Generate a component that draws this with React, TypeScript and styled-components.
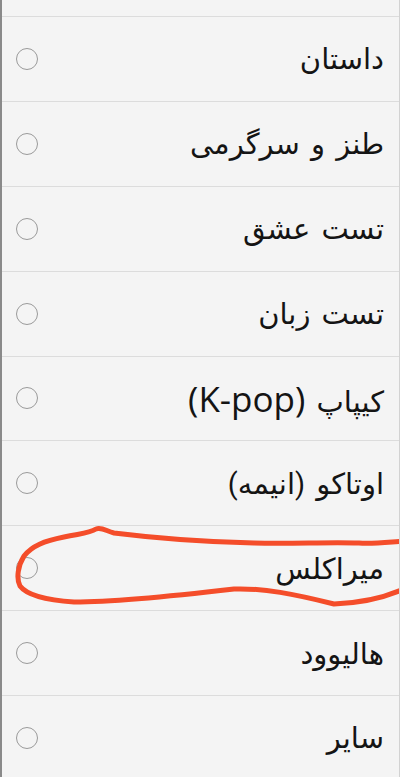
import React, { ReactElement } from "react";
import styled, { createGlobalStyle } from "styled-components";

const GlobalStyle = createGlobalStyle`
  html, body {
    margin: 0;
    padding: 0;
    background: #f4f4f4;
  }
`;

const Frame = styled.div`
  position: relative;
  width: 400px;
  height: 777px;
  overflow: hidden;

  box-sizing: border-box;
  background-color: #f4f4f4;
  border-left: 2px solid #8a8a8a;
  border-right: 1px solid #d2d2d2;

  font-family: Roboto, "DejaVu Sans", sans-serif;
`;

const List = styled.ul`
  display: flex;
  flex-direction: column;

  margin: 0;
  padding: 0;
  list-style: none;
  direction: rtl;
`;

const TopStub = styled.li`
  height: 17px;
  flex-shrink: 0;
  box-sizing: border-box;
  border-bottom: 1px solid #dcdcdc;
`;

const Row = styled.li`
  display: flex;
  align-items: center;
  justify-content: space-between;
  flex-shrink: 0;

  height: 84.875px;
  padding: 0 15px 0 14px;
  box-sizing: border-box;
  border-bottom: 1px solid #dcdcdc;
`;

const Label = styled.span`
  font-size: 29px;
  color: #141414;
  line-height: 1;
  padding-top: 2px;
  white-space: nowrap;
  word-spacing: 4px;
`;

const Latin = styled.span`
  direction: ltr;
  unicode-bidi: isolate;
  font-family: "Open Sans", Roboto, sans-serif;
  font-size: 35px;
  word-spacing: 0;
`;

const Radio = styled.span`
  width: 22px;
  height: 22px;
  box-sizing: border-box;
  border: 1.5px solid #9a9a9a;
  border-radius: 50%;
  flex-shrink: 0;
`;

const Scribble = styled.svg`
  position: absolute;
  left: 0;
  top: 0;
  pointer-events: none;
`;

type Item = { fa: string; latin?: string };

const items: Item[] = [
  { fa: "داستان" },
  { fa: "طنز و سرگرمی" },
  { fa: "تست عشق" },
  { fa: "تست زبان" },
  { fa: "کیپاپ", latin: "(K-pop)" },
  { fa: "اوتاکو (انیمه)" },
  { fa: "میراکلس" },
  { fa: "هالیوود" },
  { fa: "سایر" },
];

const App = (): ReactElement => {
  return (
    <>
      <GlobalStyle />
      <Frame>
        <List>
          <TopStub />
          {items.map((item) => (
            <Row key={item.fa}>
              <Label>
                {item.fa}
                {item.latin ? (
                  <>
                    {" "}
                    <Latin>{item.latin}</Latin>
                  </>
                ) : null}
              </Label>
              <Radio />
            </Row>
          ))}
        </List>

        <Scribble width="400" height="777" viewBox="-2 0 400 777">
          <path
            d="M 402 541 C 385 542, 370 544, 355 543 C 320 542, 290 544, 250 543 C 200 542, 150 538, 110 533 C 102 531, 98 527, 92 529 C 86 533, 80 533, 60 537 C 40 541, 28 546, 20 556 C 14 566, 12 578, 16 586 C 22 594, 40 600, 70 602 C 110 602, 170 596, 230 589 C 260 588, 290 594, 330 604 C 360 603, 385 596, 402 588"
            fill="none"
            stroke="#f44d2a"
            strokeWidth="5"
            strokeLinecap="round"
            strokeLinejoin="round"
          />
        </Scribble>
      </Frame>
    </>
  );
};

export default App;
